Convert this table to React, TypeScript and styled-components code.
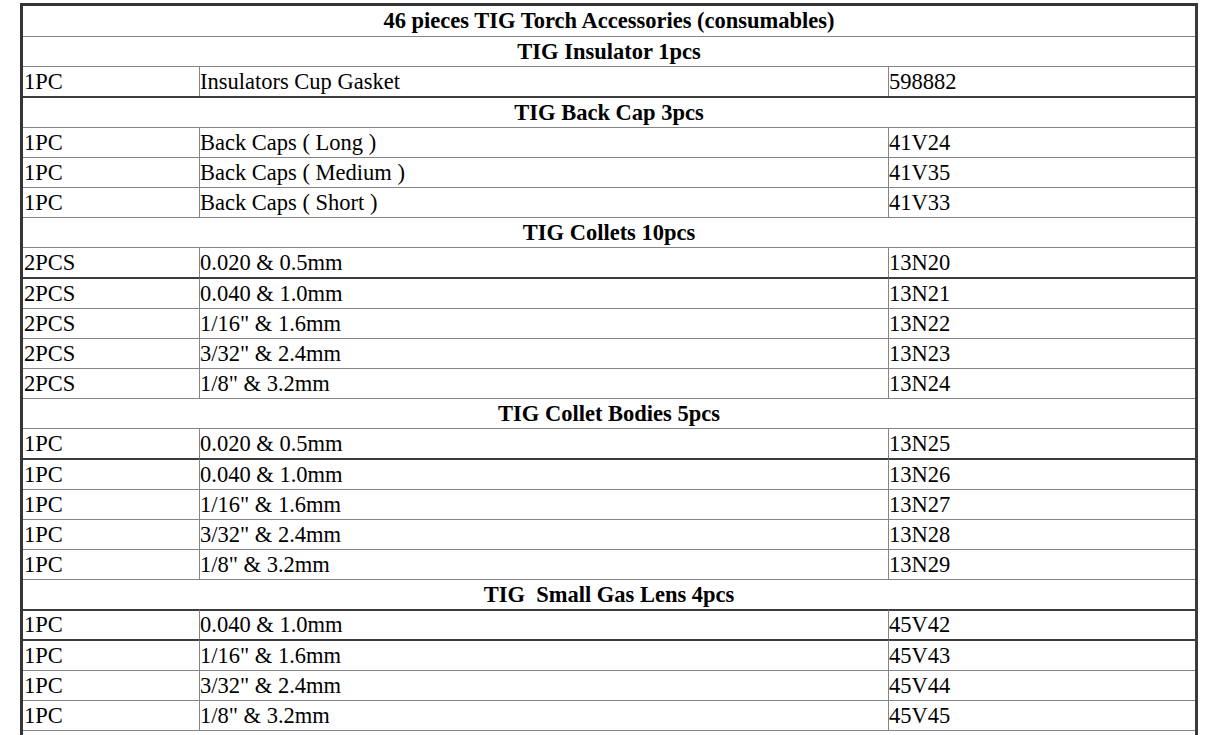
import React from "react";
import styled, { createGlobalStyle } from "styled-components";

const GlobalStyle = createGlobalStyle`
  html, body { margin: 0; padding: 0; background: #ffffff; }
  body { font-family: "Liberation Serif", "Times New Roman", serif; color: #000; }
`;

const Page = styled.div`
  padding: 3px 0 0 20px;
`;

const Table = styled.table`
  width: 1178px;
  table-layout: fixed;
  border-collapse: separate;
  border-spacing: 0;
  border: 3px solid #353535;
  border-right-color: #3a3a3a;
  font-family: "Liberation Serif", "Times New Roman", serif;
  font-size: 22.5px;
`;

const Row = styled.tr<{ $strong?: boolean; $first?: boolean; $tight?: boolean }>`
  & > td {
    border-top: ${(p) => (p.$first ? "0" : p.$strong ? "2px solid #3c3c3c" : "1px solid #858585")};
    line-height: ${(p) => (p.$first ? "30px" : p.$tight ? "28px" : "29px")};
  }
`;

const Cell = styled.td<{ $divider?: boolean }>`
  padding: 0 0 0 ${(p) => (p.$divider ? "0" : "1px")};
  box-sizing: border-box;
  white-space: nowrap;
  overflow: hidden;
  vertical-align: middle;
  border-left: ${(p) => (p.$divider ? "1px solid #858585" : "0")};
  text-align: left;
`;

const Header = styled.td`
  padding: 0;
  font-weight: bold;
  text-align: center;
  white-space: pre;
`;

type Item = [string, string, string];
type Section = { title: string; items: Item[] };

const sections: Section[] = [
  { title: "TIG Insulator 1pcs", items: [["1PC", "Insulators Cup Gasket", "598882"]] },
  {
    title: "TIG Back Cap 3pcs",
    items: [
      ["1PC", "Back Caps ( Long )", "41V24"],
      ["1PC", "Back Caps ( Medium )", "41V35"],
      ["1PC", "Back Caps ( Short )", "41V33"],
    ],
  },
  {
    title: "TIG Collets 10pcs",
    items: [
      ["2PCS", "0.020 & 0.5mm", "13N20"],
      ["2PCS", "0.040 & 1.0mm", "13N21"],
      ["2PCS", "1/16\" & 1.6mm", "13N22"],
      ["2PCS", "3/32\" & 2.4mm", "13N23"],
      ["2PCS", "1/8\" & 3.2mm", "13N24"],
    ],
  },
  {
    title: "TIG Collet Bodies 5pcs",
    items: [
      ["1PC", "0.020 & 0.5mm", "13N25"],
      ["1PC", "0.040 & 1.0mm", "13N26"],
      ["1PC", "1/16\" & 1.6mm", "13N27"],
      ["1PC", "3/32\" & 2.4mm", "13N28"],
      ["1PC", "1/8\" & 3.2mm", "13N29"],
    ],
  },
  {
    title: "TIG  Small Gas Lens 4pcs",
    items: [
      ["1PC", "0.040 & 1.0mm", "45V42"],
      ["1PC", "1/16\" & 1.6mm", "45V43"],
      ["1PC", "3/32\" & 2.4mm", "45V44"],
      ["1PC", "1/8\" & 3.2mm", "45V45"],
    ],
  },
];

// rows whose top border is drawn darker in the reference
const strongRows = new Set([3, 9, 15, 20, 21]);
const tightRows = new Set([20]);

export default function App() {
  let idx = 0;
  const rows: React.ReactNode[] = [];
  rows.push(
    <Row key="title" $first>
      <Header colSpan={3}>46 pieces TIG Torch Accessories (consumables)</Header>
    </Row>
  );
  idx++;
  sections.forEach((s, si) => {
    rows.push(
      <Row key={`h${si}`} $strong={strongRows.has(idx)} $tight={tightRows.has(idx)}>
        <Header colSpan={3}>{s.title}</Header>
      </Row>
    );
    idx++;
    s.items.forEach((it, ii) => {
      rows.push(
        <Row key={`r${si}-${ii}`} $strong={strongRows.has(idx)} $tight={tightRows.has(idx)}>
          <Cell>{it[0]}</Cell>
          <Cell $divider>{it[1]}</Cell>
          <Cell $divider>{it[2]}</Cell>
        </Row>
      );
      idx++;
    });
  });
  rows.push(
    <Row key="tail">
      <Header colSpan={3}>&nbsp;</Header>
    </Row>
  );

  return (
    <>
      <GlobalStyle />
      <Page>
        <Table>
          <colgroup>
            <col style={{ width: 176 }} />
            <col style={{ width: 689 }} />
            <col style={{ width: 307 }} />
          </colgroup>
          <tbody>{rows}</tbody>
        </Table>
      </Page>
    </>
  );
}
